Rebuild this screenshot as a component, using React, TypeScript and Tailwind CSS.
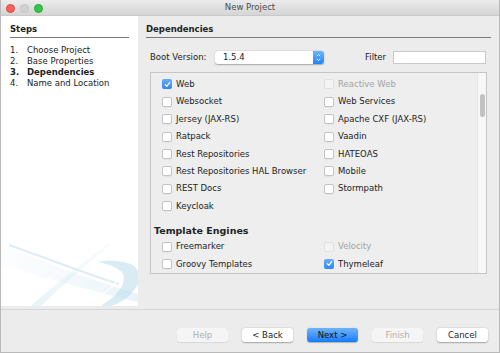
import React from "react";

type Dep = { label: string; checked?: boolean; disabled?: boolean };

const WEB_LEFT: Dep[] = [
  { label: "Web", checked: true },
  { label: "Websocket" },
  { label: "Jersey (JAX-RS)" },
  { label: "Ratpack" },
  { label: "Rest Repositories" },
  { label: "Rest Repositories HAL Browser" },
  { label: "REST Docs" },
  { label: "Keycloak" },
];

const WEB_RIGHT: Dep[] = [
  { label: "Reactive Web", disabled: true },
  { label: "Web Services" },
  { label: "Apache CXF (JAX-RS)" },
  { label: "Vaadin" },
  { label: "HATEOAS" },
  { label: "Mobile" },
  { label: "Stormpath" },
];

const TEMPLATE_LEFT: Dep[] = [{ label: "Freemarker" }, { label: "Groovy Templates" }];
const TEMPLATE_RIGHT: Dep[] = [{ label: "Velocity", disabled: true }, { label: "Thymeleaf", checked: true }];

const STEPS = ["Choose Project", "Base Properties", "Dependencies", "Name and Location"];

function CheckBox({ checked, disabled }: { checked?: boolean; disabled?: boolean }) {
  if (checked) {
    return (
      <span className="flex h-[10px] w-[10px] items-center justify-center rounded-[2px] bg-gradient-to-b from-[#68acf8] to-[#2f86f4]">
        <svg width="7" height="7" viewBox="0 0 7 7">
          <path d="M1.2 3.6 L2.8 5.3 L5.8 1.3" fill="none" stroke="#fff" strokeWidth="1.2" strokeLinecap="round" strokeLinejoin="round" />
        </svg>
      </span>
    );
  }
  return (
    <span
      className={
        disabled
          ? "h-[10px] w-[10px] rounded-[2px] border border-[#e0e0e0] bg-[#f3f3f3]"
          : "h-[10px] w-[10px] rounded-[2px] border border-[#c4c4c4] bg-white shadow-[0_0.5px_0.5px_rgba(0,0,0,0.08)]"
      }
    />
  );
}

function DepRow({ dep }: { dep: Dep }) {
  return (
    <div className="flex h-[17.4px] items-center gap-[4px]">
      <CheckBox checked={dep.checked} disabled={dep.disabled} />
      <span className={dep.disabled ? "text-[#a3a3a3]" : "text-[#222]"}>{dep.label}</span>
    </div>
  );
}

function DepColumns({ left, right }: { left: Dep[]; right: Dep[] }) {
  return (
    <div className="flex pl-[11px]">
      <div className="w-[162px]">
        {left.map((d) => (
          <DepRow key={d.label} dep={d} />
        ))}
      </div>
      <div className="flex-1">
        {right.map((d) => (
          <DepRow key={d.label} dep={d} />
        ))}
      </div>
    </div>
  );
}

// pale swoosh at the bottom of the steps panel
function Wave() {
  return (
    <svg width="137" height="62" viewBox="0 0 137 62" className="block">
      <defs>
        <linearGradient id="fadeL" x1="0" y1="0" x2="1" y2="0">
          <stop offset="0" stopColor="#d9ecf4" stopOpacity="0.2" />
          <stop offset="1" stopColor="#b4d9e8" stopOpacity="0.8" />
        </linearGradient>
        <linearGradient id="fadeD" x1="1" y1="0" x2="0" y2="1">
          <stop offset="0" stopColor="#e3f1f7" stopOpacity="0.5" />
          <stop offset="1" stopColor="#c4e1ed" stopOpacity="0.8" />
        </linearGradient>
      </defs>
      <path d="M2 2 C30 12 70 30 137 50 L137 58 C80 44 30 30 2 22 Z" fill="url(#fadeL)" opacity="0.4" />
      <path d="M8 1 C40 12 80 28 118 40" fill="none" stroke="#cfe6f0" strokeWidth="2" opacity="0.7" />
      <path d="M106 0 L110 0 C90 18 62 40 40 62 L30 62 C54 40 84 18 106 0 Z" fill="url(#fadeD)" opacity="0.5" />
      <path d="M96 18 C118 14 137 20 137 28 L137 40 C130 52 122 58 110 62 L100 62 C116 52 126 40 122 30 C118 24 108 20 96 18 Z" fill="#b9dcea" opacity="0.55" />
      <path d="M80 62 C100 52 112 44 116 36" fill="none" stroke="#ffffff" strokeWidth="1.2" opacity="0.9" />
      <path d="M70 62 C92 52 106 42 110 34" fill="none" stroke="#ffffff" strokeWidth="0.8" opacity="0.8" />
    </svg>
  );
}

function MacButton({ children, variant = "normal" }: { children: React.ReactNode; variant?: "normal" | "disabled" | "default" }) {
  const base = "flex h-[14px] w-[51px] items-center justify-center rounded-[3px] text-[8.5px]";
  if (variant === "default") {
    return (
      <div className={base + " bg-gradient-to-b from-[#6cb3fa] to-[#0c7cfd] text-[#111] shadow-[0_0.5px_1px_rgba(0,0,0,0.25)]"}>
        {children}
      </div>
    );
  }
  if (variant === "disabled") {
    return <div className={base + " bg-[#f5f5f5] text-[#adadad] shadow-[0_0.5px_1px_rgba(0,0,0,0.08)]"}>{children}</div>;
  }
  return <div className={base + " bg-white text-[#222] shadow-[0_0.5px_1.5px_rgba(0,0,0,0.3)]"}>{children}</div>;
}

export default function App() {
  return (
    <div
      className="flex h-[353px] w-[500px] flex-col overflow-hidden border-x border-b border-[#b9b9b9] bg-[#ececec] text-[8.5px] text-[#222]"
      style={{ fontFamily: '"DejaVu Sans", "Liberation Sans", sans-serif' }}
    >
      {/* title bar */}
      <div className="relative flex h-[16px] shrink-0 items-center justify-center border-b border-[#c9c9c9] bg-gradient-to-b from-[#ebebeb] to-[#d5d5d5]">
        <div className="absolute left-[5px] top-[3.5px] flex gap-[5px]">
          <span className="h-[9px] w-[9px] rounded-full border border-[#e2463f] bg-[#fc605c]" />
          <span className="h-[9px] w-[9px] rounded-full border border-[#c5c5c5] bg-[#d2d2d2]" />
          <span className="h-[9px] w-[9px] rounded-full border border-[#24a732] bg-[#34c84a]" />
        </div>
        <span className="text-[8.5px] text-[#4a4a4a]">New Project</span>
      </div>

      {/* body */}
      <div className="flex h-[290px] shrink-0">
        <div className="flex w-[137px] flex-col bg-white">
          <div className="px-[9px] pt-[7px]">
            <div className="border-b border-[#7a7a7a] pb-[1px] font-bold">Steps</div>
            <ol className="mt-[7px] leading-[11px]">
              {STEPS.map((s, i) => (
                <li key={s} className={i === 2 ? "flex font-bold" : "flex"}>
                  <span className="w-[17px]">{i + 1}.</span>
                  <span>{s}</span>
                </li>
              ))}
            </ol>
          </div>
          <div className="mt-auto">
            <Wave />
          </div>
        </div>

        <div className="flex flex-1 flex-col pl-[8px] pr-[8px] pt-[7px]">
          <div className="border-b border-[#7a7a7a] pb-[1px] font-bold">Dependencies</div>
          <div className="mt-[13px] flex h-[14px] items-center pl-[4px]">
            <span className="w-[65px]">Boot Version:</span>
            <div className="flex h-[13px] w-[109px] items-stretch rounded-[3px] bg-white shadow-[0_0.5px_1.5px_rgba(0,0,0,0.3)]">
              <span className="flex flex-1 items-center pl-[8px]">1.5.4</span>
              <span className="flex w-[11px] items-center justify-center rounded-r-[3px] bg-gradient-to-b from-[#6cb3fa] to-[#1a84fd]">
                <svg width="5" height="9" viewBox="0 0 5 9">
                  <path d="M0.8 3.2 L2.5 1.4 L4.2 3.2 M0.8 5.8 L2.5 7.6 L4.2 5.8" fill="none" stroke="#fff" strokeWidth="0.9" />
                </svg>
              </span>
            </div>
            <span className="ml-[41px] w-[28px]">Filter</span>
            <div className="h-[13px] w-[93px] border border-[#c9c9c9] bg-white" />
          </div>

          <div className="mt-[7px] ml-[4px] mr-[4px] flex h-[202px] border border-[#c5c5c5] bg-[#eeeeee]">
            <div className="flex-1 overflow-hidden pt-[3px]">
              <DepColumns left={WEB_LEFT} right={WEB_RIGHT} />
              <div className="mt-[9px] pl-[3px] text-[9.5px] font-bold leading-[14px]">Template Engines</div>
              <DepColumns left={TEMPLATE_LEFT} right={TEMPLATE_RIGHT} />
            </div>
            <div className="w-[9px] border-l border-[#e6e6e6] bg-[#f7f7f7] pt-[21px]">
              <div className="mx-auto h-[23px] w-[5px] rounded-full bg-[#c2c2c2]" />
            </div>
          </div>
        </div>
      </div>

      {/* footer */}
      <div className="mt-[3px] h-[1px] shrink-0 bg-[#d6d6d6]" />
      <div className="flex flex-1 items-start justify-end gap-[14px] pr-[11px] pt-[18px]">
        <MacButton variant="disabled">Help</MacButton>
        <MacButton>&lt; Back</MacButton>
        <MacButton variant="default">Next &gt;</MacButton>
        <MacButton variant="disabled">Finish</MacButton>
        <MacButton>Cancel</MacButton>
      </div>
    </div>
  );
}
